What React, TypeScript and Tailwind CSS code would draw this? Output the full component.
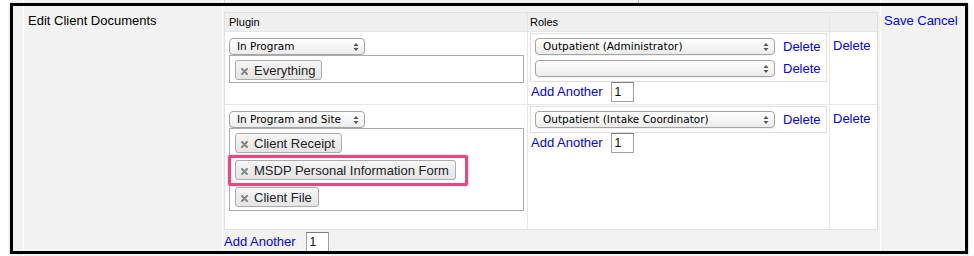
const link = "text-[#0000ee] text-[13px] leading-[16px] cursor-pointer";

const Arrows = () => (
  <svg width="6" height="10" viewBox="0 0 6 10" className="shrink-0">
    <path d="M0.5 4 L3 1 L5.5 4 Z" fill="#555" />
    <path d="M0.5 6 L3 9 L5.5 6 Z" fill="#555" />
  </svg>
);

const XIcon = () => (
  <svg width="7" height="7" viewBox="0 0 7 7" className="shrink-0 mt-[2px]">
    <path d="M1 1 L6 6 M6 1 L1 6" stroke="#858585" strokeWidth="2" strokeLinecap="round" />
  </svg>
);

function Select({ label, wide }: { label: string; wide?: boolean }) {
  return (
    <div
      className={`${wide ? "w-[240px]" : "w-[136px]"} h-[17px] shrink-0 flex items-center justify-between rounded-[4px] border border-[#a3a3a3] bg-linear-to-b from-white to-[#ebebeb] pl-[7px] pr-[5px] shadow-[0_1px_0_rgba(0,0,0,0.06)]`}
    >
      <span className="font-['DejaVu_Sans',sans-serif] text-[10.5px] leading-none text-black">{label}</span>
      <Arrows />
    </div>
  );
}

function Tag({ text }: { text: string }) {
  return (
    <div className="flex h-[20px] items-center rounded-[3px] border border-[#ababab] bg-linear-to-b from-[#f6f6f6] to-[#e4e4e4] pl-[5px] pr-[6px]">
      <XIcon />
      <span className="ml-[6px] text-[13px] leading-none text-[#222]">{text}</span>
    </div>
  );
}

function Counter() {
  return (
    <div className="w-[23px] h-[20px] border border-[#a0a0a0] border-t-[#7d7d7d] bg-white pl-[3px] text-[12px] leading-[18px] text-black">
      1
    </div>
  );
}

function AddAnother({ gap }: { gap: string }) {
  return (
    <div className="flex items-center">
      <span className={link}>Add Another</span>
      <div className={gap}>
        <Counter />
      </div>
    </div>
  );
}

function RoleLine({ label }: { label: string }) {
  return (
    <div className="flex items-center">
      <Select label={label} wide />
      <span className={`${link} ml-[8px]`}>Delete</span>
    </div>
  );
}

export default function App() {
  return (
    <div className="relative w-[974px] h-[256px] overflow-hidden bg-white font-['Liberation_Sans',Arial,Helvetica,sans-serif] text-[13px] leading-[16px]">
      {/* bit of the row above, peeking out over the frame */}
      <div className="ml-[10px] w-[957px] h-[3px] flex bg-[#f2f2f2]">
        <div className="w-[13px]" />
        <div className="w-px bg-white" />
        <div className="w-[198px]" />
        <div className="w-px bg-white" />
        <div className="w-px" />
        <div className="w-px bg-[#d8d8d8]" />
        <div className="w-[413px]" />
        <div className="w-px bg-[#b8b8b8]" />
        <div className="w-[241px]" />
        <div className="w-px bg-white" />
      </div>

      <div className="ml-[10px] w-[958px] h-[251px] flex overflow-hidden border-[3px] border-black bg-[#f2f2f2] shadow-[0_1px_2px_rgba(0,0,0,0.35)]">
        <div className="w-[10px] shrink-0" />
        <div className="w-px shrink-0 bg-white" />

        <div className="w-[198px] shrink-0 pt-[7px] pl-[4px] text-black">Edit Client Documents</div>
        <div className="w-px shrink-0 bg-white" />

        <div className="w-[657px] shrink-0 pt-[6px] pl-[1px]">
          <div className="w-[654px] border border-[#e0e0e0] bg-white">
            <div className="flex h-[19px] border-b border-[#e6e6e6] bg-[#efefef] text-[11px] leading-[18px] text-black">
              <div className="w-[302px] pl-[4px]">Plugin</div>
              <div className="w-[302px] border-l border-[#e6e6e6] pl-[2px]">Roles</div>
              <div className="flex-1 border-l border-[#e6e6e6]" />
            </div>

            {/* row 1 */}
            <div className="flex h-[73px] border-b border-[#e6e6e6]">
              <div className="w-[302px] pt-[6px] pl-[4px]">
                <Select label="In Program" />
                <div className="w-[295px] border border-[#acacac] pt-[4px] pb-[2px] pl-[5px] flex flex-col items-start">
                  <Tag text="Everything" />
                </div>
              </div>
              <div className="w-[302px] border-l border-[#e6e6e6] pt-px pl-[2px]">
                <div className="w-[297px] border border-[#dedede] p-[4px] flex flex-col gap-[5px]">
                  <RoleLine label="Outpatient (Administrator)" />
                  <RoleLine label="" />
                </div>
                <div className="pl-px">
                  <AddAnother gap="ml-[8px]" />
                </div>
              </div>
              <div className="flex-1 border-l border-[#e6e6e6] pt-[5px] pl-[3px]">
                <div className="h-[17px] flex items-center">
                  <span className={link}>Delete</span>
                </div>
              </div>
            </div>

            {/* row 2 */}
            <div className="flex h-[124px]">
              <div className="relative w-[302px] pt-[6px] pl-[4px]">
                <Select label="In Program and Site" />
                <div className="w-[295px] border border-[#acacac] pt-[4px] pb-[3px] pl-[5px] flex flex-col items-start gap-[7px]">
                  <Tag text="Client Receipt" />
                  <Tag text="MSDP Personal Information Form" />
                  <Tag text="Client File" />
                </div>
                {/* annotation box */}
                <div className="absolute left-[3px] top-[50px] w-[240px] h-[31px] rounded-[2px] border-[3px] border-[#f0447a] shadow-[0_0_2px_rgba(240,68,122,0.5)]" />
              </div>
              <div className="w-[302px] border-l border-[#e6e6e6] pt-px pl-[2px]">
                <div className="w-[297px] border border-[#dedede] p-[4px]">
                  <RoleLine label="Outpatient (Intake Coordinator)" />
                </div>
                <div className="pl-px">
                  <AddAnother gap="ml-[8px]" />
                </div>
              </div>
              <div className="flex-1 border-l border-[#e6e6e6] pt-[5px] pl-[3px]">
                <div className="h-[17px] flex items-center">
                  <span className={link}>Delete</span>
                </div>
              </div>
            </div>
          </div>

          <div className="mt-[2px]">
            <AddAnother gap="ml-[10px]" />
          </div>
        </div>
        <div className="w-px shrink-0 bg-white" />

        <div className="flex-1 pt-[7px] pl-[3px]">
          <span className={link}>Save Cancel</span>
        </div>
      </div>

      <div className="ml-[10px] w-[957px] h-[2px] flex bg-[#f2f2f2]">
        <div className="w-[13px]" />
        <div className="w-px bg-white" />
      </div>
    </div>
  );
}
